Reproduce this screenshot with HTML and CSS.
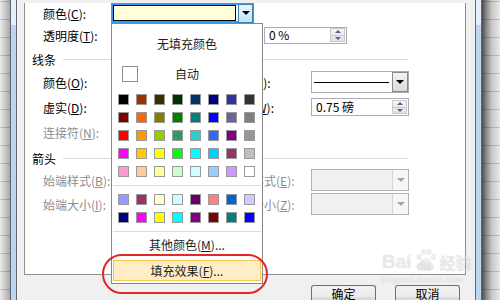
FILE: index.html
```html
<!DOCTYPE html>
<html>
<head>
<meta charset="utf-8">
<title>设置自选图形格式</title>
<link rel="stylesheet" href="styles.css">
</head>
<body>
<div class="screen">
	<div class="sheet sheet_l"></div>
	<div class="frame"></div>

	<div class="dialog">
		<div class="panel">
			<div class="row r1">
				<span class="lbl">颜色(<u>C</u>):</span>
				<div class="combo">
					<div class="combo_swatch"></div>
					<div class="combo_btn"><i class="arrow"></i></div>
				</div>
			</div>
			<div class="row r2">
				<span class="lbl">透明度(<u>T</u>):</span>
				<div class="slider"></div>
				<div class="spin spin_pct"><span>0 %</span><div class="spin_btns"><i class="up"></i><i class="down"></i></div></div>
			</div>

			<div class="sect s1"><span>线条</span><i></i></div>
			<div class="row r3">
				<span class="lbl">颜色(<u>O</u>):</span>
				<div class="box left"></div>
				<span class="rlbl">线型(<u>S</u>):</span>
				<div class="drop"><div class="line_sample"></div><div class="drop_btn"><i class="arrow"></i></div></div>
			</div>
			<div class="row r4">
				<span class="lbl">虚实(<u>D</u>):</span>
				<div class="box left"></div>
				<span class="rlbl">粗细(<u>W</u>):</span>
				<div class="spin spin_pt"><span>0.75 磅</span><div class="spin_btns"><i class="up"></i><i class="down"></i></div></div>
			</div>
			<div class="row r5 off">
				<span class="lbl">连接符(<u>N</u>):</span>
				<div class="box left"></div>
			</div>

			<div class="sect s2"><span>箭头</span><i></i></div>
			<div class="row r6 off">
				<span class="lbl">始端样式(<u>B</u>):</span>
				<div class="box left"></div>
				<span class="rlbl">末端样式(<u>E</u>):</span>
				<div class="drop"><div class="drop_blank"></div><div class="drop_btn"><i class="arrow"></i></div></div>
			</div>
			<div class="row r7 off">
				<span class="lbl">始端大小(<u>I</u>):</span>
				<div class="box left"></div>
				<span class="rlbl">末端大小(<u>Z</u>):</span>
				<div class="drop"><div class="drop_blank"></div><div class="drop_btn"><i class="arrow"></i></div></div>
			</div>
		</div>

		<div class="btns">
			<div class="btn">确定</div>
			<div class="btn">取消</div>
		</div>

		<!-- 颜色下拉面板 -->
		<div class="popup">
			<div class="pop_title">无填充颜色</div>
			<div class="pop_auto"><i class="auto_box"></i><span>自动</span><i></i></div>
			<div class="pal">
				<i style="background:#000000"></i><i style="background:#993300"></i><i style="background:#333300"></i><i style="background:#003300"></i><i style="background:#003366"></i><i style="background:#000080"></i><i style="background:#333399"></i><i style="background:#333333"></i>
				<i style="background:#800000"></i><i style="background:#ff6600"></i><i style="background:#808000"></i><i style="background:#008000"></i><i style="background:#008080"></i><i style="background:#0000ff"></i><i style="background:#666699"></i><i style="background:#808080"></i>
				<i style="background:#ff0000"></i><i style="background:#ff9900"></i><i style="background:#99cc00"></i><i style="background:#339966"></i><i style="background:#33cccc"></i><i style="background:#3366ff"></i><i style="background:#800080"></i><i style="background:#969696"></i>
				<i style="background:#ff00ff"></i><i style="background:#ffcc00"></i><i style="background:#ffff00"></i><i style="background:#00ff00"></i><i style="background:#00ffff"></i><i style="background:#00ccff"></i><i style="background:#993366"></i><i style="background:#c0c0c0"></i>
				<i style="background:#ff99cc"></i><i style="background:#ffcc99"></i><i style="background:#ffff99"></i><i style="background:#ccffcc"></i><i style="background:#ccffff"></i><i style="background:#99ccff"></i><i style="background:#cc99ff"></i><i style="background:#ffffff"></i>
			</div>
			<div class="pop_sep"></div>
			<div class="pal pal2">
				<i style="background:#9999ff"></i><i style="background:#993366"></i><i style="background:#ffffcc"></i><i style="background:#ccffff"></i><i style="background:#660066"></i><i style="background:#ff8080"></i><i style="background:#0066cc"></i><i style="background:#ccccff"></i>
				<i style="background:#000080"></i><i style="background:#ff00ff"></i><i style="background:#ffff00"></i><i style="background:#00ffff"></i><i style="background:#800080"></i><i style="background:#800000"></i><i style="background:#008080"></i><i style="background:#0000ff"></i>
			</div>
			<div class="pop_sep"></div>
			<div class="pop_more">其他颜色(<u>M</u>)...</div>
			<div class="pop_fill">填充效果(<u>F</u>)...</div>
		</div>

		<div class="mark"></div>
	</div>

	<div class="frame"></div>
	<div class="sheet sheet_r"></div>

	<div class="wm">
		<div class="wm_logo">
			<span class="wm_bai">Bai</span>
			<span class="wm_paw">
				<svg width="24" height="24" viewBox="0 0 24 24">
					<ellipse cx="5" cy="9" rx="2.6" ry="3.2"/>
					<ellipse cx="9.5" cy="4" rx="2.6" ry="3.2"/>
					<ellipse cx="15" cy="4" rx="2.6" ry="3.2"/>
					<ellipse cx="19.5" cy="9" rx="2.6" ry="3.2"/>
					<path d="M12 10c-4 0-8 6-8 9.5 0 3 3 3.5 8 3.5s8-.5 8-3.5c0-3.5-4-9.5-8-9.5z"/>
				</svg>
				<b>du</b>
			</span>
			<span class="wm_jy">经验</span>
		</div>
		<div class="wm_url">jingyan.baidu.com</div>
	</div>
</div>
</body>
</html>
```

FILE: styles.css
```css
*{ margin:0; padding:0; box-sizing:border-box;}
body{
	width:500px;
	height:300px;
	overflow:hidden;
	background:#f0f0f0;
	font:12px "Noto Sans CJK SC", sans-serif;
	color:#000;
}
u{ text-decoration:underline; text-underline-offset:1px;}

.screen{
	position:relative;
	display:flex;
	width:500px;
	height:300px;
	overflow:hidden;
}

/* 两侧的表格和窗口边框 */
.sheet{ height:300px;}
.sheet_l{
	width:10px;
	background:
		repeating-linear-gradient(180deg, transparent 0 1px, rgba(0,0,0,.16) 1px 2px, transparent 2px 18px),
		linear-gradient(90deg, #ececec, #a9a9a9);
}
.sheet_r{
	width:18px;
	background:
		repeating-linear-gradient(180deg, transparent 0 1px, rgba(0,0,0,.16) 1px 2px, transparent 2px 18px),
		linear-gradient(90deg, #4c4c4c, #858585 4px, #c9c9c9 10px, #e9e9e9);
}
.frame{
	width:7px;
	height:300px;
	border-left:1px solid #5d6671;
	border-right:1px solid #5d6671;
	background:linear-gradient(#e6eff9 0 25px, #bcd6f2 25px);
}

/* 对话框 */
.dialog{
	position:relative;
	width:458px;
	padding:0 9px 0 7px;
	background:#f0f0f0;
}
.panel{
	height:272px;
	padding-left:18px;
	background:#fff;
	border:1px solid #8e8f91;
	border-top:0;
}
.row{
	display:flex;
	align-items:center;
	white-space:nowrap;
}
.lbl{ width:68px;}
.rlbl{ width:83px; margin-left:18px;}
.off .lbl,
.off .rlbl{ color:#8d8d8d;}

.r1{ margin-top:3px; height:20px;}
.r2{ margin-top:3px; height:18px;}
.s1{ margin-top:8px;}
.r3{ margin-top:5px; height:22px;}
.r4{ margin-top:5px; height:18px;}
.r5{ margin-top:7px; height:18px;}
.s2{ margin-top:10px;}
.r6{ margin-top:4px; height:22px;}
.r7{ margin-top:2px; height:22px;}

.sect{
	display:flex;
	align-items:center;
	width:376px;
	height:14px;
	margin-left:-11px;
}
.sect i{
	flex:1;
	height:1px;
	margin-left:7px;
	background:#d5dde3;
}

/* 颜色下拉框 */
.combo{
	display:flex;
	align-items:center;
	width:143px;
	height:20px;
	border:2px solid #3a98ef;
	background:#fff;
}
.combo_swatch{
	flex:1;
	height:16px;
	margin-right:2px;
	border:1px solid #000;
	background:#ffffda;
}
.combo_btn{
	display:flex;
	align-items:center;
	justify-content:center;
	width:15px;
	height:19px;
	margin-right:-1px;
	border:1px solid #3c7fb1;
	background:linear-gradient(#eaf6fd, #bfe4f8);
}
.arrow{
	width:0;
	height:0;
	border-left:4px solid transparent;
	border-right:4px solid transparent;
	border-top:4px solid #000;
}

.slider{ width:144px; height:18px;}
.box{
	height:20px;
	border:1px solid #abadb3;
	background:#fff;
}
.box.left{ width:99px;}

/* 微调框 */
.spin{
	display:flex;
	align-items:center;
	height:18px;
	border:1px solid #abadb3;
	background:#fff;
}
.spin span{
	flex:1;
	padding-left:4px;
	line-height:16px;
}
.spin_pct{ width:83px; height:17px; margin-left:9px;}
.spin_pt{ width:98px;}
.spin_btns{
	display:flex;
	flex-direction:column;
	width:15px;
	height:14px;
	margin-right:1px;
	border:1px solid #c9c9c9;
	background:linear-gradient(#f5f5f5, #e2e2e2);
}
.spin_btns i{
	flex:1;
	display:flex;
	align-items:center;
	justify-content:center;
}
.spin_btns .up{ border-bottom:1px solid #c9c9c9;}
.spin_btns .up::after{
	content:"";
	border-left:3px solid transparent;
	border-right:3px solid transparent;
	border-bottom:3px solid #4f6391;
}
.spin_btns .down::after{
	content:"";
	border-left:3px solid transparent;
	border-right:3px solid transparent;
	border-top:3px solid #4f6391;
}

/* 右侧下拉框 */
.drop{
	display:flex;
	align-items:center;
	width:98px;
	height:22px;
	border:1px solid #abadb3;
	background:#fff;
}
.line_sample{
	flex:1;
	height:1px;
	margin:0 3px 0 2px;
	background:#000;
}
.drop_blank{ flex:1;}
.drop_btn{
	display:flex;
	align-items:center;
	justify-content:center;
	width:16px;
	height:20px;
	border:1px solid #8a8a8a;
	background:linear-gradient(#f3f3f3, #dadada);
}
.off .drop{
	border-color:#adb2b5;
	background:#f0f0f0;
}
.off .drop_btn{
	border:0;
	border-left:1px solid #d6d6d6;
	background:#f6f6f6;
}
.off .arrow{ border-top-color:#a3a3a3;}

/* 底部按钮（下半截在窗口外） */
.btns{
	display:flex;
	justify-content:flex-end;
	gap:19px;
	margin-top:10px;
	padding-right:6px;
}
.btn{
	width:65px;
	height:18px;
	border:1px solid #707070;
	border-bottom:0;
	border-radius:3px 3px 0 0;
	background:linear-gradient(#f2f2f2 0, #ebebeb 11px, #dddddd 11px, #d6d6d6);
	text-align:center;
	line-height:15px;
}

/* 颜色面板 */
.popup{
	position:absolute;
	left:94px;
	top:23px;
	z-index:2;
	width:152px;
	height:261px;
	border:1px solid #868686;
	background:#fff;
	color:#1e1e1e;
}
.pop_title{
	height:39px;
	line-height:39px;
	text-align:center;
}
.pop_auto{
	display:grid;
	grid-template-columns:1fr auto 1fr;
	align-items:center;
	height:16px;
	margin-top:3px;
	line-height:16px;
}
.auto_box{
	width:16px;
	height:16px;
	margin-left:10px;
	border:1px solid #8f8f8f;
}
.pal{
	display:grid;
	grid-template-columns:repeat(8, 11px);
	gap:7px;
	margin-top:12px;
	padding-left:6px;
}
.pal i{
	display:block;
	width:11px;
	height:11px;
	border:1px solid #9a9a9a;
}
.pal2{ margin-top:8px;}
.pop_sep{
	height:1px;
	margin:8px 1px 0;
	background:#d9dde2;
}
.pop_more{
	height:26px;
	line-height:26px;
	text-align:center;
}
.pop_fill{
	height:21px;
	margin:2px 1px 0;
	border:1px solid #f3c74f;
	background:#feedc5;
	line-height:19px;
	text-align:center;
}

/* 红色标注圈 */
.mark{
	position:absolute;
	left:85px;
	top:254px;
	z-index:3;
	width:166px;
	height:40px;
	border:2px solid #e2262c;
	border-radius:20px;
}

/* 水印 */
.wm{
	position:absolute;
	left:382px;
	top:246px;
	z-index:1;
	color:rgba(255,255,255,.5);
	text-shadow:0 0 1px rgba(120,120,120,.35);
}
.wm_logo{
	display:flex;
	align-items:flex-end;
	height:26px;
}
.wm_bai{
	font:bold 19px/20px "Liberation Sans", sans-serif;
}
.wm_paw{
	position:relative;
	width:24px;
	height:24px;
	margin:0 2px;
}
.wm_paw svg{ fill:rgba(200,200,200,.3);}
.wm_paw b{
	position:absolute;
	left:3px;
	bottom:0;
	font:bold 12px/12px "Liberation Sans", sans-serif;
}
.wm_jy{
	font:bold 16px/20px "Noto Sans CJK SC", sans-serif;
}
.wm_url{
	margin-top:3px;
	font:8px/9px "Liberation Sans", sans-serif;
	letter-spacing:1px;
}
```
